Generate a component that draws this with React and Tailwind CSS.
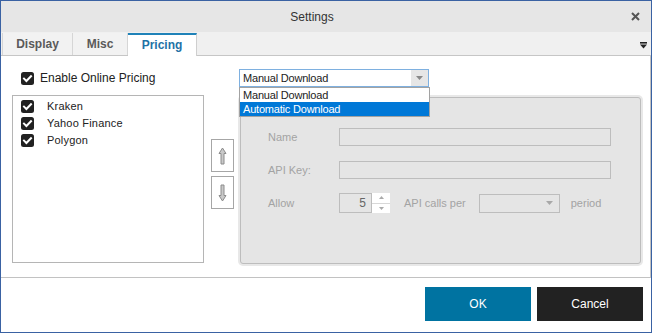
import React from "react";

const F = { fontFamily: '"Liberation Sans", Arial, sans-serif' };

function Check() {
  return (
    <svg width="13" height="13" viewBox="0 0 13 13" className="shrink-0">
      <rect x="0" y="0" width="13" height="13" rx="2.5" fill="#222" />
      <path d="M3 6.6 L5.4 9 L10 4.2" stroke="#fff" strokeWidth="2" fill="none" strokeLinecap="square" />
    </svg>
  );
}

function Arrow({ down }) {
  return (
    <svg width="9" height="18" viewBox="0 0 9 18" style={down ? { transform: "rotate(180deg)" } : undefined}>
      <path d="M4.5 1 L8 6.5 L6 6.5 L6 17 L3 17 L3 6.5 L1 6.5 Z" fill="#c9c9c9" stroke="#8c8c8c" strokeWidth="1" strokeLinejoin="round" />
    </svg>
  );
}

function Tri({ color = "#7a7a7a", w = 7, h = 4 }) {
  return (
    <svg width={w} height={h} viewBox={`0 0 ${w} ${h}`}>
      <path d={`M0 0 L${w} 0 L${w / 2} ${h} Z`} fill={color} />
    </svg>
  );
}

export default function App() {
  return (
    <div className="w-[652px] h-[333px] border border-[#3a62a3] bg-white flex flex-col text-[12px] text-[#222]" style={F}>
      {/* Title bar */}
      <div className="h-[31px] bg-[#e6e6e6] flex items-center shrink-0">
        <div className="flex-1 text-center text-[12px] text-[#333] pl-[2px]">Settings</div>
        <div className="w-[30px] flex justify-center items-center pr-[1px]">
          <svg width="9" height="9" viewBox="0 0 9 9">
            <path d="M1 1 L8 8 M8 1 L1 8" stroke="#555" strokeWidth="2" />
          </svg>
        </div>
      </div>

      {/* Tab strip */}
      <div className="h-[24px] bg-[#f0f0f0] border-b border-[#c6c6c6] flex items-end pl-[1px] shrink-0">
        <div className="h-[22px] w-[71px] border-l border-r border-[#d6d6d6] bg-[#f2f2f2] flex items-center justify-center font-bold text-[#5a5a5a] text-[12px]">Display</div>
        <div className="h-[22px] w-[55px] border-r border-[#d6d6d6] bg-[#f2f2f2] flex items-center justify-center font-bold text-[#5a5a5a] text-[12px]">Misc</div>
        <div className="h-[23px] -mb-px w-[69px] border-t-2 border-t-[#1f82b8] border-r border-[#cfcfcf] bg-white flex items-center justify-center font-bold text-[#1f72a6] text-[12px] pb-[1px]">Pricing</div>
        <div className="ml-auto self-center mt-[3px] pr-[4px]">
          <svg width="7" height="7" viewBox="0 0 7 7">
            <rect x="0" y="0" width="7" height="1.6" fill="#222" />
            <path d="M0 2.6 L7 2.6 L3.5 6.6 Z" fill="#222" />
          </svg>
        </div>
      </div>

      {/* Content */}
      <div className="h-[222px] border-r border-b border-[#c2c2c2] shrink-0 flex flex-col">
        <div className="flex items-center mt-[13px] h-[18px] pl-[20px]">
          <div className="w-[218px] flex items-center gap-[6px]">
            <Check />
            <span className="text-[12px] text-[#222]">Enable Online Pricing</span>
          </div>
          <div className="relative z-10">
            <div className="w-[190px] h-[18px] border border-[#7eb0e0] bg-white flex items-center">
              <span className="flex-1 pl-[3px] text-[11px] tracking-[-0.2px] text-[#222]">Manual Download</span>
              <div className="w-[17px] h-full bg-[#e6e6e6] flex items-center justify-center">
                <Tri color="#888" w={7} h={4} />
              </div>
            </div>
            <div className="absolute left-0 top-[18px] w-[191px] border border-[#a2a2a2] bg-white text-[11px] tracking-[-0.2px]">
              <div className="h-[14px] leading-[15px] pl-[3px] text-[#222]">Manual Download</div>
              <div className="h-[14px] leading-[14px] pl-[3px] bg-[#0078d7] text-white">Automatic Download</div>
            </div>
          </div>
        </div>

        <div className="flex mt-[8px] pl-[11px]">
          {/* list */}
          <div className="w-[192px] h-[168px] border border-[#b5b5b5] bg-white pt-[2px] pl-[8px]">
            {["Kraken", "Yahoo Finance", "Polygon"].map((t) => (
              <div key={t} className="h-[17px] flex items-center gap-[13px]">
                <Check />
                <span className="text-[11px] tracking-[0.2px] text-[#222]">{t}</span>
              </div>
            ))}
          </div>

          {/* arrows */}
          <div className="ml-[7px] mt-[44px] flex flex-col gap-[4px]">
            <div className="w-[23px] h-[33px] border border-[#a6a6a6] bg-white flex items-center justify-center">
              <Arrow />
            </div>
            <div className="w-[23px] h-[33px] border border-[#a6a6a6] bg-white flex items-center justify-center">
              <Arrow down />
            </div>
          </div>

          {/* group box */}
          <div className="ml-[6px] mt-[2px] w-[401px] h-[167px] border border-[#bdbdbd] rounded-[3px] bg-[#e5e5e5] shadow-[0_0_0_2px_#e8e8e8] pl-[27px] pt-[30px] text-[11px] text-[#a3a3a3]">
            <div className="flex items-center h-[18px]">
              <span className="w-[71px]">Name</span>
              <div className="w-[272px] h-[18px] border border-[#bdbdbd] bg-[#e5e5e5]" />
            </div>
            <div className="flex items-center h-[18px] mt-[15px]">
              <span className="w-[71px]">API Key:</span>
              <div className="w-[272px] h-[18px] border border-[#bdbdbd] bg-[#e5e5e5]" />
            </div>
            <div className="flex items-center h-[20px] mt-[14px]">
              <span className="w-[71px]">Allow</span>
              <div className="w-[33px] h-[20px] border border-[#bdbdbd] bg-[#e5e5e5] flex items-center justify-end pr-[5px] text-[12px] text-[#666]">5</div>
              <div className="w-[18px] h-[20px] bg-white flex flex-col">
                <div className="flex-1 flex items-center justify-center border-b border-[#d8d8d8]">
                  <svg width="5" height="3" viewBox="0 0 5 3"><path d="M0 3 L5 3 L2.5 0 Z" fill="#aaa" /></svg>
                </div>
                <div className="flex-1 flex items-center justify-center">
                  <Tri color="#aaa" w={5} h={3} />
                </div>
              </div>
              <span className="ml-[14px]">API calls per</span>
              <div className="ml-[13px] w-[81px] h-[19px] border border-[#bdbdbd] bg-[#e5e5e5] flex items-center justify-end pr-[6px]">
                <Tri color="#a8a8a8" w={7} h={4} />
              </div>
              <span className="ml-[11px]">period</span>
            </div>
          </div>
        </div>
      </div>

      {/* Footer */}
      <div className="flex-1 flex justify-end items-start pt-[9px] pr-[8px] gap-[6px]">
        <button className="w-[106px] h-[34px] bg-[#0073a1] text-white text-[12px] flex items-center justify-center">OK</button>
        <button className="w-[106px] h-[34px] bg-[#222222] text-white text-[12px] flex items-center justify-center">Cancel</button>
      </div>
    </div>
  );
}
